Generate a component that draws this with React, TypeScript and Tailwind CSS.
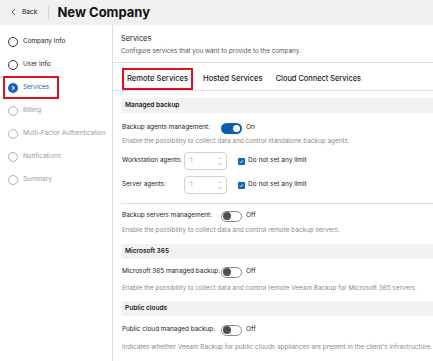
import React from "react";

const font = { fontFamily: "Inter, 'Noto Sans', sans-serif" };

function Circle({ state }: { state: "done" | "active" | "todo" }) {
  if (state === "active")
    return (
      <span className="w-[10px] h-[10px] rounded-full bg-[#1565c0] flex items-center justify-center shrink-0">
        <svg width="6" height="6" viewBox="0 0 6 6">
          <path d="M2.2 1.2 L4 3 L2.2 4.8" stroke="white" strokeWidth="1.1" fill="none" />
        </svg>
      </span>
    );
  return (
    <span
      className={
        "w-[10px] h-[10px] rounded-full border shrink-0 " +
        (state === "done" ? "border-[#333]" : "border-[#b0b0b0]")
      }
    />
  );
}

function Step({ label, state }: { label: string; state: "done" | "active" | "todo" }) {
  const color = state === "active" ? "text-[#1565c0]" : state === "done" ? "text-[#1a1a1a]" : "text-[#9a9a9a]";
  return (
    <div className="h-[23px] flex items-center gap-[5px] pl-[8px]">
      <Circle state={state} />
      <span className={"text-[6.4px] whitespace-nowrap " + color}>{label}</span>
    </div>
  );
}

function Toggle({ on }: { on: boolean }) {
  return on ? (
    <span className="w-[21px] h-[11px] rounded-full bg-[#0f5cab] flex items-center justify-end pr-[2px] shrink-0">
      <span className="w-[7px] h-[7px] rounded-full bg-white" />
    </span>
  ) : (
    <span className="w-[21px] h-[11px] rounded-full bg-white border border-[#8a8a8a] flex items-center pl-[1px] shrink-0">
      <span className="w-[8px] h-[8px] rounded-full bg-[#4a5059]" />
    </span>
  );
}

function NumInput() {
  return (
    <div className="w-[43px] h-[18px] rounded-[4px] border border-[#d0d0d0] flex items-center justify-between pl-[5px] pr-[3px] shrink-0">
      <span className="text-[6.5px] text-[#aaa]">1</span>
      <svg width="6" height="12" viewBox="0 0 6 12">
        <path d="M1 4 L3 2 L5 4" stroke="#bbb" strokeWidth="0.8" fill="none" />
        <path d="M1 8 L3 10 L5 8" stroke="#bbb" strokeWidth="0.8" fill="none" />
      </svg>
    </div>
  );
}

function Check() {
  return (
    <span className="w-[7px] h-[7px] rounded-[1px] bg-[#1565c0] flex items-center justify-center shrink-0">
      <svg width="5" height="5" viewBox="0 0 5 5">
        <path d="M1 2.6 L2 3.6 L4 1.4" stroke="white" strokeWidth="0.8" fill="none" />
      </svg>
    </span>
  );
}

function ToggleRow({ label, on }: { label: string; on: boolean }) {
  return (
    <div className="flex items-center h-[14px]">
      <span className="w-[99px] shrink-0 text-[6.4px] text-[#1a1a1a] whitespace-nowrap">{label}</span>
      <Toggle on={on} />
      <span className="ml-[4px] text-[6.6px] text-[#1a1a1a]">{on ? "On" : "Off"}</span>
    </div>
  );
}

function InputRow({ label }: { label: string }) {
  return (
    <div className="flex items-center h-[18px]">
      <span className="w-[62px] shrink-0 text-[6.4px] text-[#1a1a1a] whitespace-nowrap">{label}</span>
      <NumInput />
      <div className="ml-[11px] flex items-center gap-[3px]">
        <Check />
        <span className="text-[6.5px] text-[#1a1a1a] whitespace-nowrap">Do not set any limit</span>
      </div>
    </div>
  );
}

function Band({ label }: { label: string }) {
  return (
    <div className="h-[15px] bg-[#f2f2f2] flex items-center pl-[4px]">
      <span className="text-[6.5px] font-semibold text-[#1a1a1a]">{label}</span>
    </div>
  );
}

function Desc({ children }: { children: React.ReactNode }) {
  return <div className="text-[6.4px] text-[#8a8a8a] whitespace-nowrap h-[12px] flex items-center">{children}</div>;
}

export default function App() {
  return (
    <div className="w-[433px] h-[361px] overflow-hidden bg-white flex flex-col" style={font}>
      <div className="h-[25px] bg-[#f0f0f0] flex items-center shrink-0">
        <div className="flex items-center pl-[11px] gap-[6px]">
          <svg width="5" height="8" viewBox="0 0 5 8">
            <path d="M4 1 L1 4 L4 7" stroke="#444" strokeWidth="0.9" fill="none" />
          </svg>
          <span className="text-[6.6px] text-[#1a1a1a]">Back</span>
        </div>
        <div className="w-px h-[14px] bg-[#d6d6d6] ml-[11px]" />
        <span className="ml-[8px] text-[13px] font-bold text-[#111]">New Company</span>
      </div>
      <div className="flex flex-1 min-h-0">
        <div className="w-[113px] shrink-0 border-r border-[#dcdcdc] pt-[5px] flex flex-col">
          <Step label="Company Info" state="done" />
          <Step label="User Info" state="done" />
          <div className="relative">
            <Step label="Services" state="active" />
            <div className="absolute left-[3px] top-[0px] w-[56px] h-[23px] border-2 border-[#e0101a]" />
          </div>
          <Step label="Billing" state="todo" />
          <Step label="Multi-Factor Authentication" state="todo" />
          <Step label="Notifications" state="todo" />
          <Step label="Summary" state="todo" />
        </div>
        <div className="flex-1 flex flex-col min-w-0">
          <div className="h-[38px] border-b border-[#dedede] pl-[8px] pt-[8px] shrink-0">
            <div className="text-[7.4px] text-[#1a1a1a] leading-[12px]">Services</div>
            <div className="text-[6.3px] text-[#555] leading-[12px] whitespace-nowrap">
              Configure services that you want to provide to the company.
            </div>
          </div>
          <div className="h-[28px] border-b border-[#dedede] flex items-end pl-[9px] shrink-0">
            <div className="h-[22px] w-[71px] border-2 border-[#e0101a] flex items-center justify-center">
              <span className="text-[7.6px] font-medium text-[#1a1a1a] whitespace-nowrap">Remote Services</span>
            </div>
            <div className="h-[22px] flex items-center ml-[10px]">
              <span className="text-[7.6px] font-medium text-[#1a1a1a] whitespace-nowrap">Hosted Services</span>
            </div>
            <div className="h-[22px] flex items-center ml-[13px]">
              <span className="text-[7.4px] font-medium text-[#1a1a1a] whitespace-nowrap">Cloud Connect Services</span>
            </div>
          </div>
          <div className="pl-[8px] flex flex-col">
            <div className="mt-[7px]"><Band label="Managed backup" /></div>
            <div className="pl-[1px] flex flex-col">
              <div className="mt-[8px]"><ToggleRow label="Backup agents management:" on={true} /></div>
              <div className="mt-[1px]"><Desc>Enable the possibility to collect data and control standalone backup agents.</Desc></div>
              <div className="mt-[4px]"><InputRow label="Workstation agents:" /></div>
              <div className="mt-[6px]"><InputRow label="Server agents:" /></div>
            </div>
            <div className="h-px bg-[#dcdcdc] mt-[9px]" />
            <div className="pl-[1px] flex flex-col">
              <div className="mt-[5px]"><ToggleRow label="Backup servers management:" on={false} /></div>
              <div className="mt-[2px]"><Desc>Enable the possibility to collect data and control remote backup servers.</Desc></div>
            </div>
            <div className="mt-[7px]"><Band label="Microsoft 365" /></div>
            <div className="pl-[1px] flex flex-col">
              <div className="mt-[6px]"><ToggleRow label="Microsoft 365 managed backup:" on={false} /></div>
              <div className="mt-[4px]"><Desc>Enable the possibility to collect data and control remote Veeam Backup for Microsoft 365 servers.</Desc></div>
            </div>
            <div className="mt-[6px]"><Band label="Public clouds" /></div>
            <div className="pl-[1px] flex flex-col">
              <div className="mt-[7px]"><ToggleRow label="Public cloud managed backup:" on={false} /></div>
              <div className="mt-[5px]"><Desc>Indicates whether Veeam Backup for public clouds appliances are present in the client's infrastructure.</Desc></div>
            </div>
          </div>
        </div>
      </div>
    </div>
  );
}
